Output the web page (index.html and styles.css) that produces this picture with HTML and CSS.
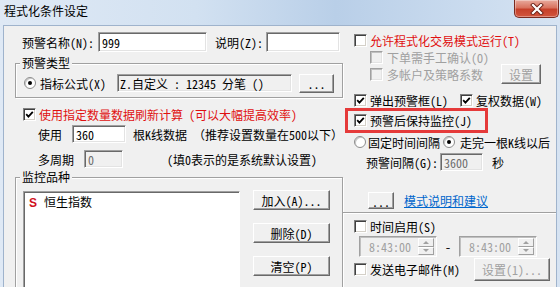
FILE: index.html
```html
<!DOCTYPE html>
<html lang="zh-CN">
<head>
  <meta charset="UTF-8">
  <title>程式化条件设定</title>
  <link rel="stylesheet" href="styles.css">
</head>
<body>
  <div class="window">
    <!-- 标题栏 -->
    <div class="titlebar">
      <span class="title">程式化条件设定</span>
      <div class="close">
        <svg width="14" height="12" viewBox="0 0 14 12">
          <path d="M3 2 L11 10 M11 2 L3 10" stroke="#6b2016" stroke-width="4" stroke-linecap="square"/>
          <path d="M3 2 L11 10 M11 2 L3 10" stroke="#fff" stroke-width="2.2" stroke-linecap="square"/>
        </svg>
      </div>
    </div>

    <div class="client">
      <!-- 左侧 -->
      <div class="left">
        <div class="row name-row">
          <span>预警名称(N):</span>
          <span class="edit name-edit">999</span>
          <span class="desc-label">说明(Z):</span>
          <span class="edit desc-edit"></span>
        </div>

        <fieldset class="group type-group">
          <legend>预警类型</legend>
          <div class="row type-row">
            <span class="radio on"></span>
            <span>指标公式(X)</span>
            <span class="edit readonly formula">Z.自定义 : 12345 分笔 ()</span>
            <button class="btn dots">...</button>
          </div>
        </fieldset>

        <div class="row refresh-row red">
          <span class="chk on"><svg width="9" height="9" viewBox="0 0 9 9"><path d="M1.2 4.2 L3.4 6.6 L7.8 1.8" fill="none" stroke="#000" stroke-width="1.8"/></svg></span>
          <span>使用指定数量数据刷新计算 (可以大幅提高效率)</span>
        </div>

        <div class="row use-row">
          <span>使用</span>
          <span class="edit count-edit">360</span>
          <span class="after">根K线数据 （推荐设置数量在500以下）</span>
        </div>

        <div class="row period-row">
          <span>多周期</span>
          <span class="edit readonly period-edit">0</span>
          <span class="after hint">(填0表示的是系统默认设置)</span>
        </div>

        <fieldset class="group stock-group">
          <legend>监控品种</legend>
          <div class="stock-body">
            <div class="list">
              <div class="list-item"><span class="mark">S</span>恒生指数</div>
            </div>
            <div class="list-buttons">
              <button class="btn">加入(A)...</button>
              <button class="btn">删除(D)</button>
              <button class="btn">清空(P)</button>
            </div>
          </div>
        </fieldset>
      </div>

      <!-- 右侧 -->
      <div class="right">
        <div class="row r-allow red">
          <span class="chk"></span>
          <span>允许程式化交易模式运行(T)</span>
        </div>
        <div class="row r-sub disabled">
          <span class="chk"></span>
          <span>下单需手工确认(O)</span>
        </div>
        <div class="row r-sub r-multi disabled">
          <span class="chk"></span>
          <span>多帐户及策略系数</span>
          <button class="btn set-btn" disabled>设置</button>
        </div>

        <div class="row r-popup">
          <span class="chk on"><svg width="9" height="9" viewBox="0 0 9 9"><path d="M1.2 4.2 L3.4 6.6 L7.8 1.8" fill="none" stroke="#000" stroke-width="1.8"/></svg></span>
          <span>弹出预警框(L)</span>
          <span class="chk on second"><svg width="9" height="9" viewBox="0 0 9 9"><path d="M1.2 4.2 L3.4 6.6 L7.8 1.8" fill="none" stroke="#000" stroke-width="1.8"/></svg></span>
          <span>复权数据(W)</span>
        </div>

        <div class="row highlight">
          <span class="chk on"><svg width="9" height="9" viewBox="0 0 9 9"><path d="M1.2 4.2 L3.4 6.6 L7.8 1.8" fill="none" stroke="#000" stroke-width="1.8"/></svg></span>
          <span>预警后保持监控(J)</span>
        </div>

        <div class="row r-mode">
          <span class="radio"></span>
          <span>固定时间间隔</span>
          <span class="radio on second"></span>
          <span>走完一根K线以后</span>
        </div>

        <div class="row r-interval">
          <span>预警间隔(G):</span>
          <span class="edit readonly interval-edit">3600</span>
          <span class="sec">秒</span>
        </div>

        <div class="row r-help">
          <button class="btn help-btn">...</button>
          <a href="#" class="link">模式说明和建议</a>
        </div>

        <div class="sep"></div>

        <div class="row r-time">
          <span class="chk"></span>
          <span>时间启用(S)</span>
        </div>

        <div class="row r-pickers">
          <div class="picker">
            <span class="picker-text">8:43:00</span>
            <span class="spin"><span class="up"></span><span class="down"></span></span>
          </div>
          <span class="dash">-</span>
          <div class="picker">
            <span class="picker-text">8:43:00</span>
            <span class="spin"><span class="up"></span><span class="down"></span></span>
          </div>
        </div>

        <div class="row r-mail">
          <span class="chk"></span>
          <span>发送电子邮件(M)</span>
          <button class="btn mail-btn" disabled>设置(1)...</button>
        </div>
      </div>
    </div>
  </div>
</body>
</html>
```

FILE: styles.css
```css
/* General */
* {
  box-sizing: border-box;
}

body {
  margin: 0;
  width: 560px;
  height: 287px;
  overflow: hidden;
  font-family: "Noto Sans Mono CJK SC", "Noto Sans CJK SC", sans-serif;
  font-size: 12px;
  color: #000;
  background: #c9dbef;
}

.window {
  width: 560px;
  height: 287px;
  padding: 0 3px;
  display: flex;
  flex-direction: column;
  background: linear-gradient(90deg, #dfe9f5 0%, #d2e1f1 35%, #b9cfe8 60%, #cbdcef 85%, #d6e3f2 100%);
}

/* Title bar */
.titlebar {
  height: 25px;
  display: flex;
  justify-content: space-between;
  align-items: flex-start;
}

.title {
  margin: 4px 0 0 1px;
  line-height: 14px;
}

.close {
  width: 45px;
  height: 18px;
  margin-right: -2px;
  display: flex;
  align-items: center;
  justify-content: center;
  border: 1px solid #7a2a1f;
  border-top: none;
  border-radius: 0 0 5px 5px;
  background: linear-gradient(#e8aa9d, #d9735f 45%, #c6402a 55%, #d2553d);
  box-shadow: inset 0 0 0 1px rgba(255, 255, 255, 0.35);
}

/* Client area */
.client {
  flex: 1;
  display: flex;
  background: #f0f0f0;
  border: 1px solid #9fb3cc;
  border-bottom: none;
  overflow: hidden;
}

.row {
  display: flex;
  align-items: center;
  white-space: nowrap;
}

.red {
  color: #e01010;
}

.disabled {
  color: #a0a0a0;
}

/* Controls */
.edit {
  display: flex;
  align-items: center;
  height: 18px;
  padding-left: 3px;
  background: #fff;
  border: 1px solid;
  border-color: #a0a0a0 #fff #fff #a0a0a0;
  box-shadow: inset 1px 1px #696969, inset -1px -1px #e3e3e3;
}

.edit.readonly {
  background: #f0f0f0;
}

.btn {
  height: 20px;
  padding: 0;
  font: inherit;
  color: #000;
  background: #f0f0f0;
  border: 1px solid;
  border-color: #fff #696969 #696969 #fff;
  box-shadow: inset -1px -1px #a0a0a0;
}

.btn:disabled {
  color: #a0a0a0;
}

.chk {
  width: 13px;
  height: 13px;
  flex: none;
  display: flex;
  align-items: center;
  justify-content: center;
  margin-right: 3px;
  background: #fff;
  border: 1px solid;
  border-color: #808080 #fff #fff #808080;
  box-shadow: inset 1px 1px #404040, inset -1px -1px #d4d0c8;
}

.disabled .chk {
  background: #f0f0f0;
  border-color: #a0a0a0 #fff #fff #a0a0a0;
  box-shadow: inset 1px 1px #c0c0c0, inset -1px -1px #e3e3e3;
}

.radio {
  width: 12px;
  height: 12px;
  flex: none;
  border-radius: 50%;
  background: #fff;
  border: 1px solid #8c8c8c;
  box-shadow: inset 1px 1px #c8c8c8;
  display: flex;
  align-items: center;
  justify-content: center;
}

.radio.on::after {
  content: "";
  width: 4px;
  height: 4px;
  border-radius: 50%;
  background: #000;
}

/* Group boxes */
.group {
  margin: 0;
  border: 1px solid #a0a0a0;
  box-shadow: inset 1px 1px #fff, 1px 1px #fff;
  min-width: 0;
}

.group legend {
  padding: 0 2px;
  line-height: 14px;
  background: #f0f0f0;
}

/* Left column */
.left {
  width: 328px;
  margin-left: 11px;
  display: flex;
  flex-direction: column;
}

.name-row {
  margin-top: 6px;
  height: 20px;
  padding-left: 7px;
}

.name-row .edit {
  height: 20px;
}

.name-edit {
  width: 109px;
  margin-left: 4px;
}

.desc-label {
  margin-left: 8px;
}

.desc-edit {
  width: 74px;
  margin-left: 3px;
}

.type-group {
  margin-top: 4px;
  padding: 4px 7px 5px 8px;
}

.type-group legend {
  margin-left: -4px;
}

.type-row {
  height: 18px;
}

.type-row .radio {
  margin-right: 4px;
}

.formula {
  width: 175px;
  margin-left: 11px;
  padding-left: 2px;
}

.dots {
  width: 35px;
  height: 19px;
  margin-left: 7px;
}

.refresh-row {
  margin-top: 8px;
  height: 16px;
  padding-left: 8px;
}

.use-row,
.period-row {
  height: 18px;
  padding-left: 23px;
}

.use-row {
  margin-top: 3px;
}

.period-row {
  margin-top: 7px;
}

.count-edit {
  width: 58px;
  margin-left: 10px;
}

.period-edit {
  width: 39px;
  margin-left: 10px;
  color: #6d6d6d;
}

.after {
  margin-left: 7px;
}

.after.hint {
  margin-left: 44px;
}

.stock-group {
  margin-top: 2px;
  padding: 7px 12px 0 7px;
  height: 130px;
}

.stock-group legend {
  margin-left: -3px;
}

.stock-body {
  display: flex;
  gap: 13px;
}

.list {
  width: 217px;
  height: 110px;
  padding: 3px 0 0 5px;
  background: #fff;
  border: 1px solid;
  border-color: #a0a0a0 #fff #fff #a0a0a0;
  box-shadow: inset 1px 1px #696969;
}

.list-item {
  line-height: 13px;
}

.mark {
  font-family: "Liberation Sans", sans-serif;
  font-weight: bold;
  color: #d01020;
  margin-right: 7px;
}

.list-buttons {
  width: 77px;
  margin-top: -1px;
  display: flex;
  flex-direction: column;
  gap: 13px;
}

/* Right column */
.right {
  flex: 1;
  padding-left: 11px;
  display: flex;
  flex-direction: column;
}

.r-allow {
  margin-top: 5px;
  height: 18px;
}

.r-sub {
  height: 16px;
  padding-left: 16px;
}

.r-sub .chk {
  margin-right: 4px;
}

.r-multi {
  height: 18px;
  padding-right: 15px;
}

.set-btn {
  width: 40px;
  margin-left: auto;
}

.r-popup {
  margin-top: 9px;
  height: 16px;
}

.chk.second {
  margin-left: 12px;
}

.highlight {
  margin-left: -9px;
  width: 143px;
  height: 25px;
  padding-left: 6px;
  border: 3px solid #e53a3a;
}

.r-mode {
  margin-top: 1px;
  height: 16px;
}

.r-mode .radio {
  margin-right: 2px;
}

.r-mode .radio.second {
  margin-left: 3px;
  margin-right: 5px;
}

.r-interval {
  margin-top: 3px;
  height: 18px;
  padding-left: 12px;
}

.interval-edit {
  width: 43px;
  margin-left: 2px;
  color: #6d6d6d;
}

.sec {
  margin-left: 9px;
}

.r-help {
  margin-top: 21px;
  height: 16px;
  padding-left: 14px;
}

.help-btn {
  width: 26px;
  height: 17px;
}

.link {
  margin-left: 10px;
  color: #0066cc;
  text-decoration: underline;
}

.sep {
  margin: 4px 0 0 -11px;
  height: 2px;
  border-top: 1px solid #a0a0a0;
  border-bottom: 1px solid #fff;
}

.r-time {
  margin-top: 4px;
  height: 16px;
}

.r-pickers {
  margin-top: 2px;
  height: 21px;
  padding-left: 5px;
}

.picker {
  width: 78px;
  height: 21px;
  display: flex;
  align-items: center;
  justify-content: space-between;
  padding: 0 2px 0 9px;
  background: #f0f0f0;
  border: 1px solid;
  border-color: #a0a0a0 #fff #fff #a0a0a0;
  box-shadow: inset 1px 1px #c0c0c0;
  color: #a0a0a0;
}

.spin {
  width: 16px;
  height: 17px;
  display: flex;
  flex-direction: column;
}

.spin span {
  flex: 1;
  display: flex;
  align-items: center;
  justify-content: center;
  border: 1px solid;
  border-color: #fff #a0a0a0 #a0a0a0 #fff;
}

.spin .up::after {
  content: "";
  border: 3px solid transparent;
  border-bottom-color: #a0a0a0;
  border-top: none;
}

.spin .down::after {
  content: "";
  border: 3px solid transparent;
  border-top-color: #a0a0a0;
  border-bottom: none;
}

.dash {
  width: 22px;
  text-align: center;
}

.r-mail {
  margin-top: 1px;
  height: 23px;
}

.mail-btn {
  width: 76px;
  height: 23px;
  margin-left: 14px;
}
```
